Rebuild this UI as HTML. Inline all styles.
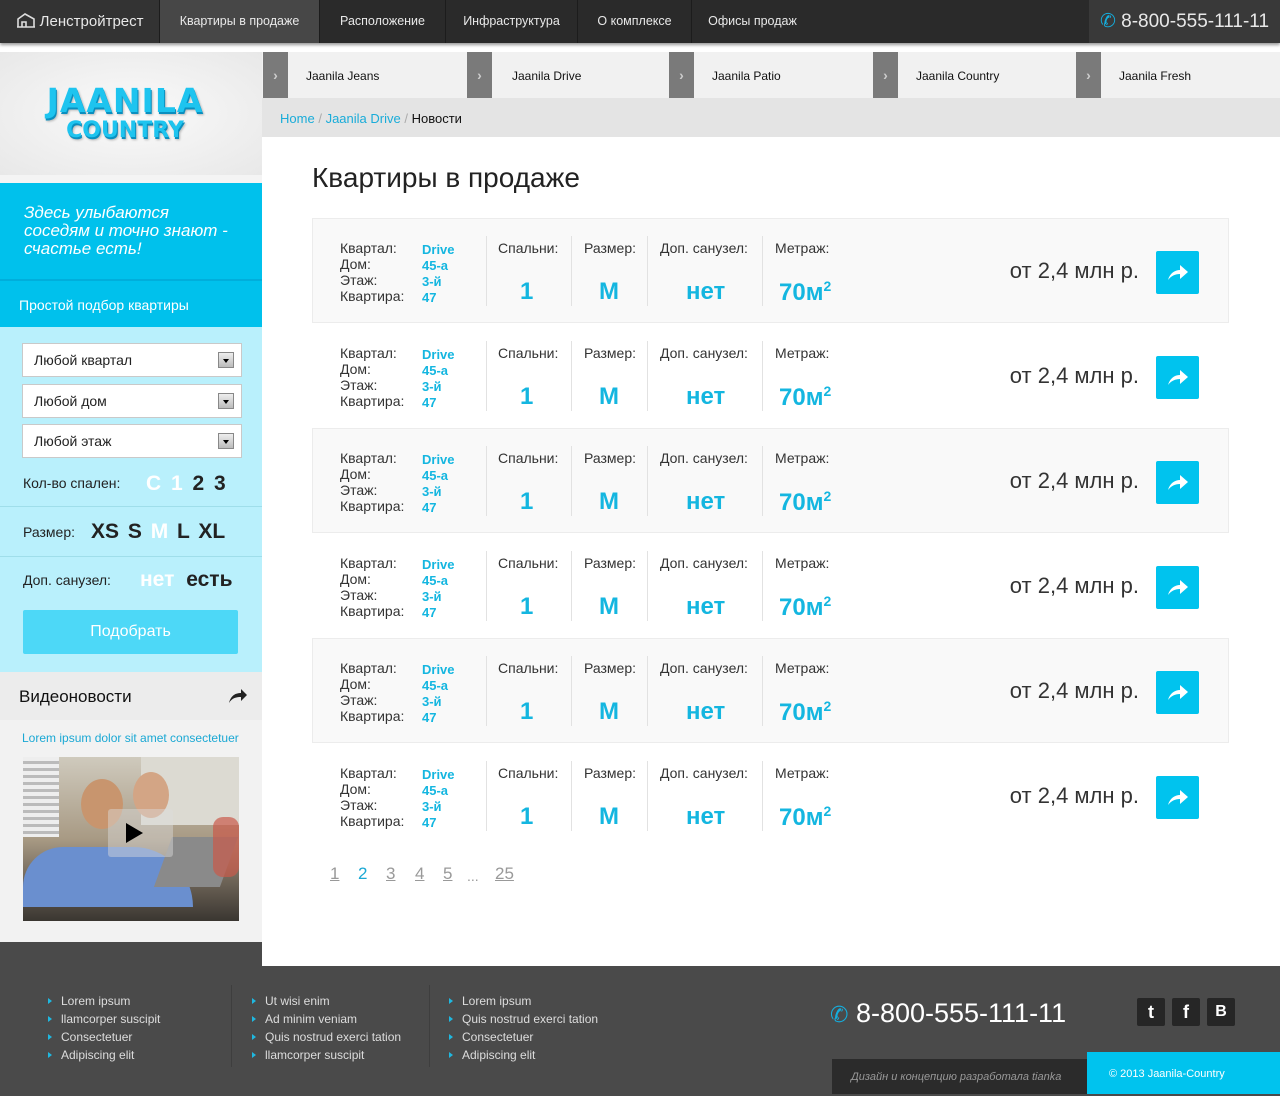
<!DOCTYPE html>
<html><head><meta charset="utf-8">
<style>
*{margin:0;padding:0;box-sizing:border-box}
body{width:1280px;height:1094px;position:relative;overflow:hidden;background:#4a4a4a;font-family:"Liberation Sans",sans-serif;color:#222}
.a{position:absolute}
.top{left:0;top:0;width:1280px;height:43px;background:#2a2a2a;box-shadow:0 2px 3px rgba(0,0,0,.4);z-index:5}
.top .it{position:absolute;top:0;height:43px;line-height:43px;color:#e8e8e8;font-size:12.5px;text-align:center;border-right:1px solid #1c1c1c}
.tab{top:52px;height:46px;background:#f1f1f1}
.chev{position:absolute;top:52px;width:25px;height:46px;background:#7a7a7a;color:#ccc;font-size:14px;line-height:46px;text-align:center;font-weight:bold}
.tabt{position:absolute;top:69px;font-size:12px;color:#111}
.row{position:absolute;left:312px;width:917px;height:105px}
.row.g{background:#f9f9f9;box-shadow:inset 0 0 0 1px #ececec}
.row .lb{position:absolute;left:28px;top:22px;font-size:14px;line-height:16px;color:#333}
.row .vl{position:absolute;left:110px;top:24px;font-size:13px;line-height:16px;color:#14b6e0;font-weight:bold}
.row .dv{position:absolute;top:18px;width:1px;height:70px;background:#e2e2e2}
.row .hd{position:absolute;top:22px;font-size:14px;color:#333}
.row .bg{position:absolute;top:60px;font-size:24px;font-weight:bold;color:#14b6e0}
.row .pr{position:absolute;right:90px;top:40px;font-size:22px;color:#333}
.row .bt{position:absolute;left:844px;top:33px;width:43px;height:43px;background:#00c3ee;border-radius:2px}
.fl{position:absolute;font-size:12px;color:#ddd;line-height:18px}
.fl div:before{content:"";display:inline-block;border-left:4px solid #1fb8e0;border-top:3px solid transparent;border-bottom:3px solid transparent;margin-right:9px;vertical-align:1px}
.sel{position:absolute;left:22px;width:220px;height:34px;background:#fff;border:1px solid #c9c9c9;font-size:14px;line-height:32px;padding-left:11px;color:#222}
.sel i{position:absolute;right:7px;top:8px;width:16px;height:16px;background:linear-gradient(#eee,#bbb);border:1px solid #888}
.sel i:after{content:"";position:absolute;left:4px;top:6px;border-top:4px solid #000;border-left:3px solid transparent;border-right:3px solid transparent}
.soc{position:absolute;top:998px;width:28px;height:28px;background:#262626;color:#fff;font-weight:bold;font-size:18px;text-align:center;line-height:28px;border-radius:2px}
.pg{position:absolute;top:864px;font-size:17px;color:#999;text-decoration:underline}
</style></head><body>
<div class="a top">
 <div class="it" style="left:0;width:160px;font-size:15px;background:#333">
  <svg width="20" height="16" viewBox="0 0 20 16" style="vertical-align:-2px"><path d="M1 15h18M2 15V7l7-5 9 5v8M2 7l7-5M6 15v-5h4v5" fill="none" stroke="#ddd" stroke-width="1.6"/></svg> Ленстройтрест</div>
 <div class="it" style="left:160px;width:160px;background:#474747">Квартиры в продаже</div>
 <div class="it" style="left:320px;width:126px">Расположение</div>
 <div class="it" style="left:446px;width:132px">Инфраструктура</div>
 <div class="it" style="left:578px;width:114px">О комплексе</div>
 <div class="it" style="left:692px;width:121px;border:none">Офисы продаж</div>
 <div class="it" style="left:1089px;width:191px;background:#393939;font-size:19px;border:none"><span style="color:#15aede">&#9990;</span> 8-800-555-111-11</div>
</div>
<div class="a" style="left:0;top:43px;width:1280px;height:923px;background:#fff"></div>
<div class="a" style="left:0;top:52px;width:262px;height:123px;background:radial-gradient(ellipse at center,#fafafa,#e8e8e8)"></div>
<div class="a" style="left:0;top:84px;width:250px;text-align:center;font-family:'DejaVu Sans',sans-serif;font-weight:bold;color:#1ec4ef;font-size:33px;letter-spacing:1px;text-shadow:1px 2px 0 #0a8fbf,2px 3px 2px rgba(0,0,0,.25);line-height:34px">JAANILA</div>
<div class="a" style="left:0;top:118px;width:250px;text-align:center;font-family:'DejaVu Sans',sans-serif;font-weight:bold;color:#1ec4ef;font-size:22px;text-shadow:1px 2px 0 #0a8fbf,2px 3px 2px rgba(0,0,0,.25);line-height:26px">COUNTRY</div>
<div class="a" style="left:0;top:175px;width:262px;height:8px;background:#f4f4f4"></div>
<div class="a" style="left:0;top:183px;width:262px;height:96px;background:#00c1ec;color:#fff;font-style:italic;font-size:17px;line-height:18px;padding:21px 0 0 24px">Здесь улыбаются<br>соседям и точно знают -<br>счастье есть!</div>
<div class="a" style="left:0;top:279px;width:262px;height:48px;background:#00c1ec;border-top:2px solid #00aedb;color:#fff;font-size:14px;padding:16px 0 0 19px">Простой подбор квартиры</div>
<div class="a" style="left:0;top:327px;width:262px;height:345px;background:#b9f0fc"></div>
<div class="sel" style="top:343px">Любой квартал<i></i></div>
<div class="sel" style="top:384px">Любой дом<i></i></div>
<div class="sel" style="top:424px">Любой этаж<i></i></div>
<div class="a" style="left:23px;top:475px;font-size:14px">Кол-во спален:</div>
<div class="a" style="left:146px;top:472px;font-size:21px;font-weight:bold;word-spacing:4px"><span style="color:#fff">С 1</span> 2 3</div>
<div class="a" style="left:0;top:506px;width:262px;height:1px;background:#9fdeea"></div>
<div class="a" style="left:23px;top:524px;font-size:14px">Размер:</div>
<div class="a" style="left:91px;top:520px;font-size:21px;font-weight:bold;color:#222;word-spacing:3px">XS S <span style="color:#fff">M</span> L XL</div>
<div class="a" style="left:0;top:556px;width:262px;height:1px;background:#9fdeea"></div>
<div class="a" style="left:23px;top:572px;font-size:14px">Доп. санузел:</div>
<div class="a" style="left:140px;top:568px;font-size:21px;font-weight:bold;word-spacing:6px"><span style="color:#fff">нет</span> есть</div>
<div class="a" style="left:23px;top:610px;width:215px;height:44px;background:#4dd8f7;border-radius:2px;color:#fff;font-size:16px;text-align:center;line-height:44px">Подобрать</div>
<div class="a" style="left:0;top:672px;width:262px;height:48px;background:#ececec;font-size:17px;padding:15px 0 0 19px;color:#111">Видеоновости</div>
<svg class="a" style="left:228px;top:688px" width="20" height="16" viewBox="0 0 20 16"><path d="M1 15C3 7 8 5 13 5V1l6 6-6 6V9C8 9 4 10 1 15z" fill="#222"/></svg>
<div class="a" style="left:0;top:720px;width:262px;height:222px;background:#f2f2f2"></div>
<div class="a" style="left:22px;top:731px;font-size:12px;color:#1aa8d4">Lorem ipsum dolor sit amet consectetuer</div>
<div class="a" style="left:23px;top:757px;width:216px;height:164px;background:linear-gradient(180deg,#cfcabd 0%,#a89a84 50%,#6f6558 75%,#3a3631 100%);overflow:hidden">
 <div class="a" style="left:0;top:0;width:36px;height:80px;background:repeating-linear-gradient(#eee 0 4px,#bbb 4px 7px)"></div>
 <div class="a" style="left:118px;top:0;width:98px;height:68px;background:#dcdad2"></div>
 <div class="a" style="left:0;top:90px;width:170px;height:60px;background:#6a8fcf;border-radius:40px 60px 0 0"></div>
 <div class="a" style="left:58px;top:22px;width:42px;height:50px;background:#c8956e;border-radius:50%"></div>
 <div class="a" style="left:110px;top:15px;width:36px;height:46px;background:#d3a585;border-radius:50%"></div>
 <div class="a" style="left:140px;top:80px;width:66px;height:50px;background:#8a8a8a;transform:skewX(-20deg)"></div>
 <div class="a" style="left:190px;top:60px;width:26px;height:60px;background:#c95a4a;opacity:.7;border-radius:10px"></div>
 <div class="a" style="left:85px;top:52px;width:65px;height:48px;background:rgba(220,220,220,.45);border-radius:3px"></div>
 <div class="a" style="left:103px;top:66px;border-left:17px solid #000;border-top:10px solid transparent;border-bottom:10px solid transparent"></div>
</div>
<div class="a tab" style="left:262px;width:1018px"></div>
<div class="chev" style="left:263px">›</div><div class="tabt" style="left:306px">Jaanila Jeans</div>
<div class="chev" style="left:467px">›</div><div class="tabt" style="left:512px">Jaanila Drive</div>
<div class="chev" style="left:669px">›</div><div class="tabt" style="left:712px">Jaanila Patio</div>
<div class="chev" style="left:873px">›</div><div class="tabt" style="left:916px">Jaanila Country</div>
<div class="chev" style="left:1076px">›</div><div class="tabt" style="left:1119px">Jaanila Fresh</div>
<div class="a" style="left:262px;top:98px;width:1018px;height:39px;background:#e4e4e4;font-size:13px;padding:13px 0 0 18px;color:#111"><span style="color:#19acd9">Home</span> <span style="color:#aaa">/</span> <span style="color:#19acd9">Jaanila Drive</span> <span style="color:#aaa">/</span> Новости</div>
<div class="a" style="left:312px;top:162px;font-size:28px;color:#222">Квартиры в продаже</div>

<div class="row g" style="top:218px"><div class="lb">Квартал:<br>Дом:<br>Этаж:<br>Квартира:</div><div class="vl">Drive<br>45-а<br>3-й<br>47</div><div class="dv" style="left:174px"></div><div class="dv" style="left:259px"></div><div class="dv" style="left:335px"></div><div class="dv" style="left:450px"></div><div class="hd" style="left:186px">Спальни:</div><div class="hd" style="left:272px">Размер:</div><div class="hd" style="left:348px">Доп. санузел:</div><div class="hd" style="left:463px">Метраж:</div><div class="bg" style="left:208px">1</div><div class="bg" style="left:287px">M</div><div class="bg" style="left:374px">нет</div><div class="bg" style="left:467px">70м<sup style="font-size:14px">2</sup></div><div class="pr">от 2,4 млн р.</div><div class="bt"><svg width="43" height="43" viewBox="0 0 43 43"><path d="M12 29c2-7 7-10 12-10v-5l8 7-8 7v-5c-5 0-9 2-12 6z" fill="#fff"/></svg></div></div>
<div class="row" style="top:323px"><div class="lb">Квартал:<br>Дом:<br>Этаж:<br>Квартира:</div><div class="vl">Drive<br>45-а<br>3-й<br>47</div><div class="dv" style="left:174px"></div><div class="dv" style="left:259px"></div><div class="dv" style="left:335px"></div><div class="dv" style="left:450px"></div><div class="hd" style="left:186px">Спальни:</div><div class="hd" style="left:272px">Размер:</div><div class="hd" style="left:348px">Доп. санузел:</div><div class="hd" style="left:463px">Метраж:</div><div class="bg" style="left:208px">1</div><div class="bg" style="left:287px">M</div><div class="bg" style="left:374px">нет</div><div class="bg" style="left:467px">70м<sup style="font-size:14px">2</sup></div><div class="pr">от 2,4 млн р.</div><div class="bt"><svg width="43" height="43" viewBox="0 0 43 43"><path d="M12 29c2-7 7-10 12-10v-5l8 7-8 7v-5c-5 0-9 2-12 6z" fill="#fff"/></svg></div></div>
<div class="row g" style="top:428px"><div class="lb">Квартал:<br>Дом:<br>Этаж:<br>Квартира:</div><div class="vl">Drive<br>45-а<br>3-й<br>47</div><div class="dv" style="left:174px"></div><div class="dv" style="left:259px"></div><div class="dv" style="left:335px"></div><div class="dv" style="left:450px"></div><div class="hd" style="left:186px">Спальни:</div><div class="hd" style="left:272px">Размер:</div><div class="hd" style="left:348px">Доп. санузел:</div><div class="hd" style="left:463px">Метраж:</div><div class="bg" style="left:208px">1</div><div class="bg" style="left:287px">M</div><div class="bg" style="left:374px">нет</div><div class="bg" style="left:467px">70м<sup style="font-size:14px">2</sup></div><div class="pr">от 2,4 млн р.</div><div class="bt"><svg width="43" height="43" viewBox="0 0 43 43"><path d="M12 29c2-7 7-10 12-10v-5l8 7-8 7v-5c-5 0-9 2-12 6z" fill="#fff"/></svg></div></div>
<div class="row" style="top:533px"><div class="lb">Квартал:<br>Дом:<br>Этаж:<br>Квартира:</div><div class="vl">Drive<br>45-а<br>3-й<br>47</div><div class="dv" style="left:174px"></div><div class="dv" style="left:259px"></div><div class="dv" style="left:335px"></div><div class="dv" style="left:450px"></div><div class="hd" style="left:186px">Спальни:</div><div class="hd" style="left:272px">Размер:</div><div class="hd" style="left:348px">Доп. санузел:</div><div class="hd" style="left:463px">Метраж:</div><div class="bg" style="left:208px">1</div><div class="bg" style="left:287px">M</div><div class="bg" style="left:374px">нет</div><div class="bg" style="left:467px">70м<sup style="font-size:14px">2</sup></div><div class="pr">от 2,4 млн р.</div><div class="bt"><svg width="43" height="43" viewBox="0 0 43 43"><path d="M12 29c2-7 7-10 12-10v-5l8 7-8 7v-5c-5 0-9 2-12 6z" fill="#fff"/></svg></div></div>
<div class="row g" style="top:638px"><div class="lb">Квартал:<br>Дом:<br>Этаж:<br>Квартира:</div><div class="vl">Drive<br>45-а<br>3-й<br>47</div><div class="dv" style="left:174px"></div><div class="dv" style="left:259px"></div><div class="dv" style="left:335px"></div><div class="dv" style="left:450px"></div><div class="hd" style="left:186px">Спальни:</div><div class="hd" style="left:272px">Размер:</div><div class="hd" style="left:348px">Доп. санузел:</div><div class="hd" style="left:463px">Метраж:</div><div class="bg" style="left:208px">1</div><div class="bg" style="left:287px">M</div><div class="bg" style="left:374px">нет</div><div class="bg" style="left:467px">70м<sup style="font-size:14px">2</sup></div><div class="pr">от 2,4 млн р.</div><div class="bt"><svg width="43" height="43" viewBox="0 0 43 43"><path d="M12 29c2-7 7-10 12-10v-5l8 7-8 7v-5c-5 0-9 2-12 6z" fill="#fff"/></svg></div></div>
<div class="row" style="top:743px"><div class="lb">Квартал:<br>Дом:<br>Этаж:<br>Квартира:</div><div class="vl">Drive<br>45-а<br>3-й<br>47</div><div class="dv" style="left:174px"></div><div class="dv" style="left:259px"></div><div class="dv" style="left:335px"></div><div class="dv" style="left:450px"></div><div class="hd" style="left:186px">Спальни:</div><div class="hd" style="left:272px">Размер:</div><div class="hd" style="left:348px">Доп. санузел:</div><div class="hd" style="left:463px">Метраж:</div><div class="bg" style="left:208px">1</div><div class="bg" style="left:287px">M</div><div class="bg" style="left:374px">нет</div><div class="bg" style="left:467px">70м<sup style="font-size:14px">2</sup></div><div class="pr">от 2,4 млн р.</div><div class="bt"><svg width="43" height="43" viewBox="0 0 43 43"><path d="M12 29c2-7 7-10 12-10v-5l8 7-8 7v-5c-5 0-9 2-12 6z" fill="#fff"/></svg></div></div>

<div class="pg" style="left:330px">1</div>
<div class="pg" style="left:358px;color:#1aa8d4;text-decoration:none">2</div>
<div class="pg" style="left:386px">3</div>
<div class="pg" style="left:415px">4</div>
<div class="pg" style="left:443px">5</div>
<div class="pg" style="left:467px;text-decoration:none;font-size:14px;top:868px">...</div>
<div class="pg" style="left:495px">25</div>

<div class="a" style="left:0;top:942px;width:262px;height:24px;background:#4a4a4a"></div>
<div class="fl" style="left:48px;top:992px"><div>Lorem ipsum</div><div>llamcorper suscipit</div><div>Consectetuer</div><div>Adipiscing elit</div></div>
<div class="a" style="left:231px;top:985px;width:1px;height:82px;background:#3e3e3e"></div>
<div class="fl" style="left:252px;top:992px"><div>Ut wisi enim</div><div>Ad minim veniam</div><div>Quis nostrud exerci tation</div><div>llamcorper suscipit</div></div>
<div class="a" style="left:429px;top:985px;width:1px;height:82px;background:#3e3e3e"></div>
<div class="fl" style="left:449px;top:992px"><div>Lorem ipsum</div><div>Quis nostrud exerci tation</div><div>Consectetuer</div><div>Adipiscing elit</div></div>
<div class="a" style="left:830px;top:998px;font-size:27px;color:#fff"><span style="color:#15aede;font-size:22px">&#9990;</span> 8-800-555-111-11</div>
<div class="soc" style="left:1137px">t</div><div class="soc" style="left:1172px">f</div><div class="soc" style="left:1207px;font-size:16px">B</div>
<div class="a" style="left:832px;top:1059px;width:255px;height:35px;background:#2b2b2b;color:#999;font-size:11px;font-style:italic;line-height:36px;padding-left:19px">Дизайн и концепцию разработала tianka</div>
<div class="a" style="left:1087px;top:1052px;width:193px;height:42px;background:#00c3ee;color:#fff;font-size:11px;line-height:44px;padding-left:22px">© 2013 Jaanila-Country</div>
</body></html>
